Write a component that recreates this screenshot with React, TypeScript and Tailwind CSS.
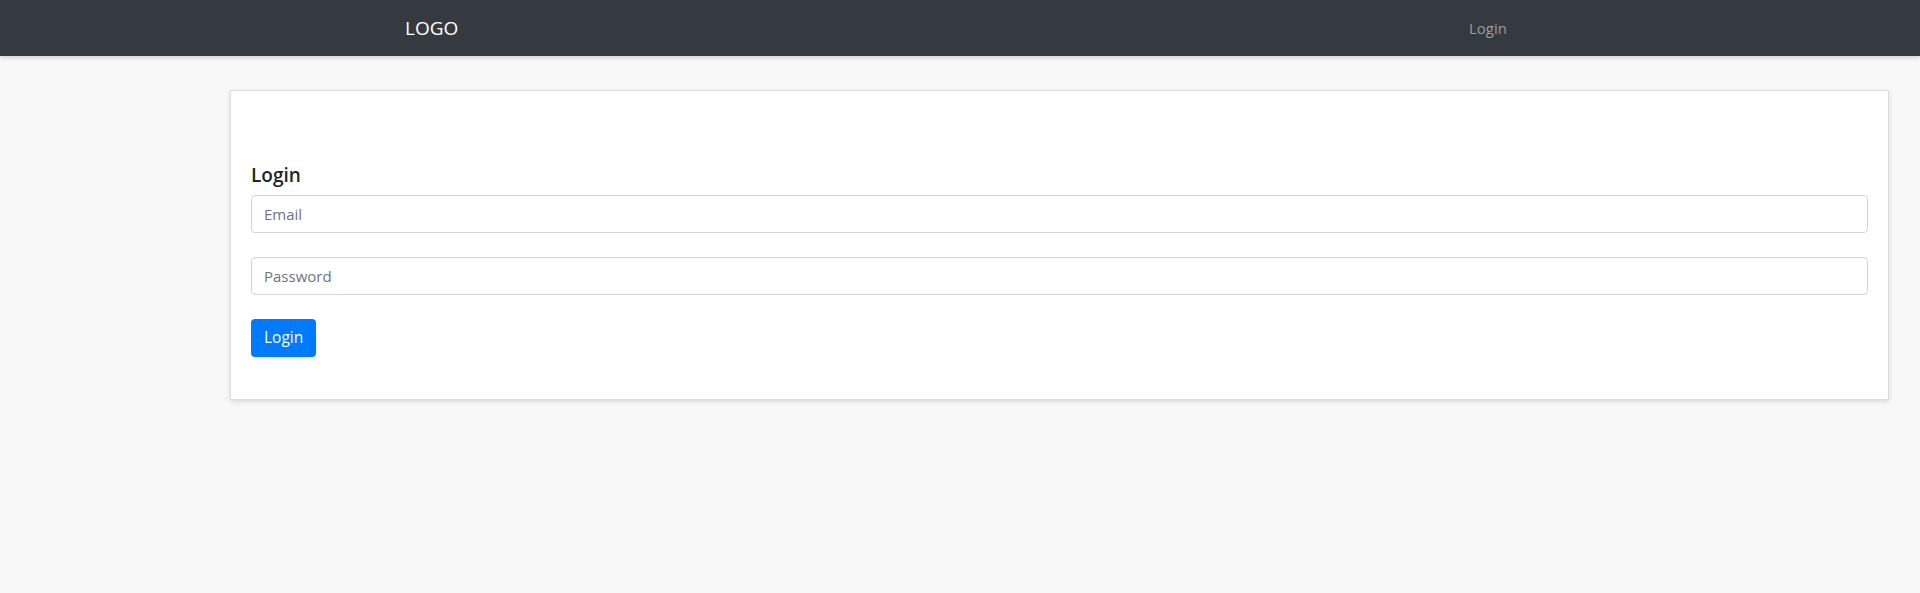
import React from 'react'

export default function App() {
  return (
    <div className="min-h-screen bg-[#f8f8f8] text-[#212529]" style={{ fontFamily: '"Open Sans", "Noto Sans", sans-serif' }}>
      <nav className="h-[56px] bg-[#343a40] shadow-[0_2px_4px_rgba(0,0,0,0.15)] relative">
        <div className="mx-auto flex h-full w-[1140px] items-center justify-between px-[15px]">
          <a href="#" className="text-[19px] leading-[30px] text-white">LOGO</a>
          <a href="#" className="px-2 text-[15px] leading-6 text-[#9a9da1]">Login</a>
        </div>
      </nav>
      <div className="pt-[34px] pl-[230px] pr-[31px]">
        <div className="border border-[#dcdcdc] bg-white px-5 pt-[72px] pb-[42px] shadow-[0_2px_5px_rgba(0,0,0,0.12)]">
          <h5 className="mb-2 text-[19px] font-semibold leading-6">Login</h5>
          <input
            type="email"
            placeholder="Email"
            className="block h-[38px] w-full rounded-[4px] border border-[#ced4da] px-3 text-[15px] outline-none placeholder:text-[#6c757d]"
          />
          <input
            type="password"
            placeholder="Password"
            className="mt-6 block h-[38px] w-full rounded-[4px] border border-[#ced4da] px-3 text-[15px] outline-none placeholder:text-[#6c757d]"
          />
          <button className="mt-6 h-[38px] rounded-[4px] bg-[#007bff] px-[13px] text-[15.5px] text-white">Login</button>
        </div>
      </div>
    </div>
  )
}
